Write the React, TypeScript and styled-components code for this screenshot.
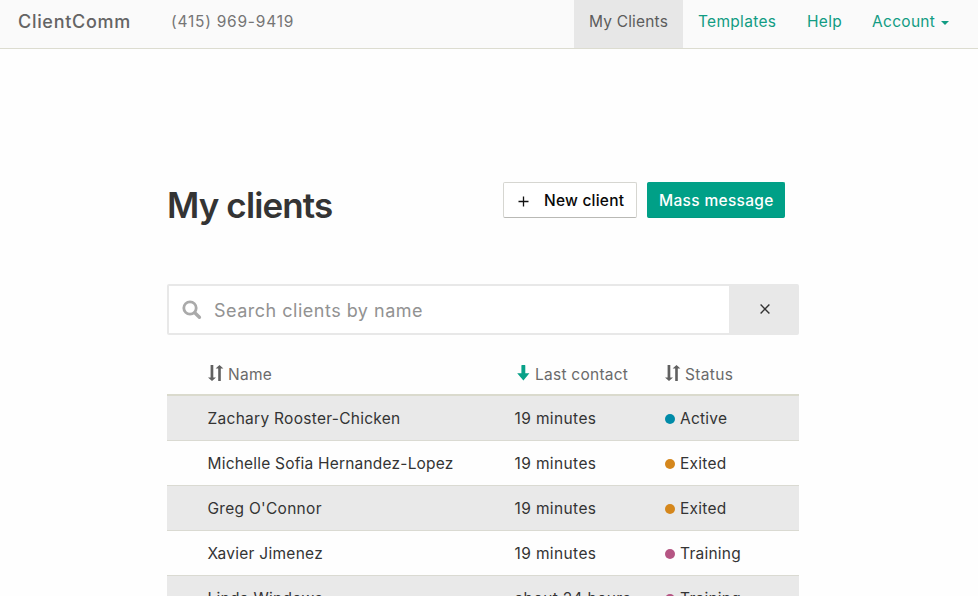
import React from "react";
import styled, { createGlobalStyle } from "styled-components";

const GlobalStyle = createGlobalStyle`
  * { box-sizing: border-box; }
  html, body { margin: 0; height: 596px; overflow: hidden; background: #fefefe; }
  body {
    color: #343434;
    font: 400 15.5px/20px Inter, "Open Sans", sans-serif;
    letter-spacing: 0.27px;
  }
  button, input { font: inherit; letter-spacing: inherit; }
`;

const Navbar = styled.nav`
  display: flex;
  height: 49px;
  padding: 0 14px 0 18px;
  background: #fafafa;
  border-bottom: 1px solid #dcdcd0;
  white-space: nowrap;
`;

const Brand = styled.div`
  width: 153px;
  padding-top: 12px;
  color: #646464;
  font-size: 18px;
  font-weight: 500;
  letter-spacing: 0.7px;
`;

const Phone = styled.div`
  padding-top: 12px;
  color: #757575;
  letter-spacing: 0.77px;
`;

const NavLinks = styled.div`
  display: flex;
  margin-left: auto;
`;

const NavLink = styled.a<{ $active?: boolean; $width: number }>`
  display: flex;
  width: ${(p) => p.$width}px;
  height: 48px;
  padding: 12px 0 0 15px;
  color: ${(p) => (p.$active ? "#5c5c5c" : "#119c83")};
  background: ${(p) => (p.$active ? "#e7e7e7" : "transparent")};
  letter-spacing: ${(p) => (p.$active ? 0.18 : 0.3)}px;
`;

const Caret = styled.span`
  width: 8px;
  height: 4px;
  margin: 9px 0 0 6px;
  border: solid transparent;
  border-width: 4px 4px 0;
  border-top-color: #119c83;
`;

const Main = styled.main`
  width: 632px;
  margin: 133px 0 0 167px;
`;

const Header = styled.header`
  display: flex;
  justify-content: space-between;
  height: 102px;
  padding-right: 14px;
`;

const Title = styled.h1`
  margin: 0;
  padding-top: 1px;
  font-size: 35px;
  font-weight: 600;
  line-height: 44px;
  letter-spacing: -0.87px;
`;

const Actions = styled.div`
  display: flex;
  gap: 10px;
`;

const Button = styled.button<{ $primary?: boolean }>`
  display: flex;
  align-items: center;
  width: ${(p) => (p.$primary ? 138 : 134)}px;
  height: 36px;
  padding: ${(p) => (p.$primary ? "2px 0 0 11px" : "2px 0 0 14px")};
  border: 1px solid ${(p) => (p.$primary ? "#00a087" : "#d6d6d1")};
  border-bottom-color: ${(p) => (p.$primary ? "#009980" : "#b9b9b5")};
  border-radius: 2px;
  background: ${(p) => (p.$primary ? "#00a087" : "#fff")};
  color: ${(p) => (p.$primary ? "#fff" : "#080808")};
  font-weight: 500;
  letter-spacing: ${(p) => (p.$primary ? 0.32 : 0.22)}px;
  white-space: nowrap;
`;

const PlusIcon = styled.svg`
  margin: 0 15px 0 0;
`;

const SearchBar = styled.div`
  display: flex;
  height: 51px;
  border: 2px solid #e8e8e8;
  border-radius: 2px;
  background: #fff;
`;

const SearchIcon = styled.svg`
  margin: 14px 12px 0 13px;
  flex: none;
`;

const SearchInput = styled.input`
  flex: 1;
  min-width: 0;
  padding: 2px 0 0;
  border: 0;
  outline: 0;
  background: transparent;
  font-size: 18px;
  letter-spacing: 0.5px;
  &::placeholder { color: #929292; opacity: 1; }
`;

const ClearButton = styled.button`
  display: flex;
  align-items: center;
  justify-content: center;
  width: 68px;
  padding: 0 0 1px 4px;
  border: 0;
  background: #e8e8e8;
`;

const Table = styled.div`
  margin-top: 24px;
`;

const Row = styled.div<{ $shaded?: boolean }>`
  display: grid;
  grid-template-columns: 307px 150px 1fr;
  height: 45px;
  padding: 13px 0 0 40.5px;
  background: ${(p) => (p.$shaded ? "#e9e9e9" : "transparent")};
  border-bottom: 1px solid #dadad2;
  white-space: nowrap;
`;

const HeadRow = styled(Row)`
  height: 37px;
  padding-top: 6px;
  border-bottom: 2px solid #dadacd;
  color: #6a6a6a;
`;

const Cell = styled.div<{ $spacing?: number }>`
  display: flex;
  letter-spacing: ${(p) => p.$spacing ?? 0.25}px;
`;

const SortIcon = styled.svg`
  flex: none;
  margin: -1px 4.5px 0 0;
`;

const Dot = styled.span<{ $color: string }>`
  width: 10px;
  height: 10px;
  margin: 5px 5px 0 0.5px;
  border-radius: 50%;
  background: ${(p) => p.$color};
`;

const SortBoth = () => (
  <SortIcon width="16" height="18" viewBox="0 0 16 18" fill="#606060">
    <path d="M2.6 1h2.7v12.4H8L4 17 0 13.4h2.6z" />
    <path d="M10.2 17V4.6H7.6L11.5 1l3.9 3.6h-2.6V17z" />
  </SortIcon>
);

const SortDown = () => (
  <SortIcon width="16" height="18" viewBox="0 0 16 18" fill="#08a188">
    <path d="M6.4 1.5Q6.4 1 6.9 1h2.9q.5 0 .5.5v7.7h4.1L8.4 16.6 2.2 9.2h4.2z" />
  </SortIcon>
);

const statusColors: Record<string, string> = {
  Active: "#008ba8",
  Exited: "#d5871c",
  Training: "#b55583",
};

const clients = [
  { name: "Zachary Rooster-Chicken", contact: "19 minutes", status: "Active" },
  { name: "Michelle Sofia Hernandez-Lopez", contact: "19 minutes", status: "Exited" },
  { name: "Greg O'Connor", contact: "19 minutes", status: "Exited" },
  { name: "Xavier Jimenez", contact: "19 minutes", status: "Training" },
  { name: "Linda Windows", contact: "about 24 hours", status: "Training" },
];

export default function App() {
  return (
    <>
      <GlobalStyle />
      <Navbar>
        <Brand>ClientComm</Brand>
        <Phone>(415) 969-9419</Phone>
        <NavLinks>
          <NavLink $active $width={109}>My Clients</NavLink>
          <NavLink $width={109}>Templates</NavLink>
          <NavLink $width={65}>Help</NavLink>
          <NavLink $width={107}>
            Account
            <Caret />
          </NavLink>
        </NavLinks>
      </Navbar>
      <Main>
        <Header>
          <Title>My clients</Title>
          <Actions>
            <Button>
              <PlusIcon width="11" height="11" viewBox="0 0 11 11" stroke="#111" strokeWidth="1.3">
                <path d="M5.5.5v10M.5 5.5h10" />
              </PlusIcon>
              New client
            </Button>
            <Button $primary>Mass message</Button>
          </Actions>
        </Header>
        <SearchBar>
          <SearchIcon width="20" height="20" viewBox="0 0 20 20" fill="none" stroke="#aaa">
            <circle cx="8" cy="8" r="6.2" strokeWidth="2.8" />
            <path d="M12.8 12.8l4.6 4.4" strokeWidth="3.4" strokeLinecap="round" />
          </SearchIcon>
          <SearchInput placeholder="Search clients by name" />
          <ClearButton aria-label="Clear search">
            <svg width="10" height="10" viewBox="0 0 10 10" stroke="#333" strokeWidth="1.4">
              <path d="M.6.6l8.8 8.8M9.4.6L.6 9.4" />
            </svg>
          </ClearButton>
        </SearchBar>
        <Table>
          <HeadRow>
            <Cell><SortBoth />Name</Cell>
            <Cell><SortDown />Last contact</Cell>
            <Cell $spacing={0.32}><SortBoth />Status</Cell>
          </HeadRow>
          {clients.map((client, index) => (
            <Row key={client.name} $shaded={index % 2 === 0}>
              <Cell $spacing={client.name.length > 25 ? 0.2 : 0.28}>{client.name}</Cell>
              <Cell $spacing={0.38}>{client.contact}</Cell>
              <Cell>
                <Dot $color={statusColors[client.status]} />
                {client.status}
              </Cell>
            </Row>
          ))}
        </Table>
      </Main>
    </>
  );
}
